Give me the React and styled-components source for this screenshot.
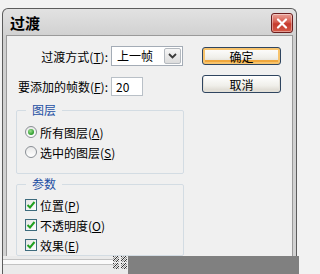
import React from 'react';
import styled, { createGlobalStyle } from 'styled-components';

const GlobalStyle = createGlobalStyle`
  html, body {
    margin: 0;
    padding: 0;
    background: #f2f2f2;
    overflow: hidden;
  }
  body {
    font-family: "Noto Sans CJK SC", "Noto Sans", sans-serif;
    font-size: 12px;
    color: #000;
  }
`;

const Screen = styled.div`
  width: 299px;
  height: 274px;
  display: flex;
  flex-direction: column;
  padding-top: 8px;
  box-sizing: border-box;
  background: #f2f2f2;
`;

const Window = styled.div`
  margin-left: 2px;
  width: 295px;
  height: 248px;
  box-sizing: border-box;
  display: flex;
  flex-direction: column;
  border: 1px solid #5c5c5c;
  border-bottom: none;
  border-radius: 6px 6px 0 0;
  background: linear-gradient(#e2e2e2, #cfcfcf 30px, #d2d2d2);
  padding: 0 3px;
`;

const TitleBar = styled.div`
  height: 26px;
  display: flex;
  align-items: center;
  justify-content: space-between;
  padding-left: 4px;
`;

const Title = styled.span`
  font-size: 15px;
  font-weight: bold;
  letter-spacing: 0;
`;

const CloseButton = styled.div`
  width: 22px;
  height: 20px;
  box-sizing: border-box;
  margin-top: 2px;
  border: 1px solid #6b1d1d;
  border-radius: 3px;
  background: linear-gradient(#eaa298, #d65c4e 45%, #c53a2c 55%, #d45a48);
  display: flex;
  align-items: center;
  justify-content: center;
  box-shadow: inset 0 0 0 1px rgba(255, 255, 255, 0.4);
`;

const Body = styled.div`
  flex: 1;
  background: #f0f0f0;
  border: 1px solid #9a9a9a;
  border-bottom: none;
  padding: 10px 0 0 7px;
  display: flex;
  gap: 19px;
`;

const FormColumn = styled.div`
  width: 169px;
  display: flex;
  flex-direction: column;
`;

const FieldRow = styled.div`
  display: flex;
  align-items: center;
  height: ${(p) => p.$h}px;
  margin-top: ${(p) => p.$top || 0}px;
`;

const Label = styled.label`
  width: 94px;
  text-align: right;
  white-space: nowrap;
  margin-right: 3px;
`;

const Select = styled.div`
  width: 72px;
  height: 20px;
  box-sizing: border-box;
  border: 1px solid #a4acb6;
  background: #fff;
  display: flex;
  align-items: stretch;
`;

const SelectValue = styled.span`
  flex: 1;
  padding-left: 5px;
  line-height: 18px;
`;

const ArrowButton = styled.span`
  width: 15px;
  margin: 1px;
  border: 1px solid #b4b9bf;
  border-radius: 2px;
  background: linear-gradient(#f6f6f6, #dcdcdc);
  display: flex;
  align-items: center;
  justify-content: center;
`;

const TextInput = styled.div`
  width: 32px;
  height: 19px;
  box-sizing: border-box;
  border: 1px solid #b9c0c7;
  background: #fff;
  padding-left: 4px;
  line-height: 17px;
`;

const Group = styled.fieldset`
  margin: ${(p) => p.$top}px 0 0 2px;
  padding: ${(p) => p.$pad};
  width: 168px;
  box-sizing: border-box;
  border: 1px solid #d3dce3;
  border-radius: 2px;
  min-width: 0;
`;

const Legend = styled.legend`
  margin-left: 9px;
  padding: 0 6px;
  height: 14px;
  line-height: 14px;
  color: #1d4fa3;
`;

const OptionRow = styled.div`
  height: 20px;
  display: flex;
  align-items: center;
  padding-left: 8px;
  gap: 3px;
`;

const Radio = styled.span`
  width: 12px;
  height: 12px;
  box-sizing: border-box;
  border-radius: 50%;
  border: 1px solid #8a8f95;
  background: linear-gradient(#e8e8e8, #ffffff);
  display: flex;
  align-items: center;
  justify-content: center;
  &::after {
    content: '';
    width: 6px;
    height: 6px;
    border-radius: 50%;
    background: ${(p) => (p.$on ? 'radial-gradient(circle at 40% 35%, #9be08c, #2b9a2b 70%)' : 'transparent')};
  }
`;

const Check = styled.span`
  width: 12px;
  height: 12px;
  box-sizing: border-box;
  border: 1px solid #3d6b7d;
  background: linear-gradient(135deg, #e4e4e4, #ffffff);
  display: flex;
  align-items: center;
  justify-content: center;
`;

const ButtonColumn = styled.div`
  display: flex;
  flex-direction: column;
  gap: 10px;
  padding-top: 1px;
`;

const Button = styled.div`
  width: 79px;
  height: 18px;
  box-sizing: border-box;
  border: 1px solid #2f4560;
  border-radius: 3px;
  background: linear-gradient(#ffffff, #f0efea 60%, #d8d4cb);
  display: flex;
  align-items: center;
  justify-content: center;
  box-shadow: ${(p) => (p.$default ? 'inset 0 0 0 2px #f7c36c, inset 0 -2px 0 2px #f0a73c' : 'inset 0 -1px 0 1px #e3e0d8')};
`;

const BottomStrip = styled.div`
  flex: 1;
  display: flex;
`;

const StatusPart = styled.div`
  width: 126px;
  margin-left: 2px;
  box-sizing: border-box;
  border-left: 1px solid #5c5c5c;
  background: #eaeaea;
  display: flex;
  align-items: flex-start;
  position: relative;
`;

const StatusLines = styled.div`
  flex: 1;
  margin-top: 3px;
  height: 4px;
  border-top: 1px solid #c2c2c2;
  border-bottom: 1px solid #c2c2c2;
  background: #fafafa;
`;

const Grip = styled.svg`
  flex: none;
  margin-right: 1px;
`;

const Backdrop = styled.div`
  flex: 1;
  background: #808080;
`;

const Chevron = () => (
  <svg width="9" height="6" viewBox="0 0 9 6">
    <path d="M1 1 L4.5 4.5 L8 1" fill="none" stroke="#3a3a3a" strokeWidth="1.8" />
  </svg>
);

const Tick = () => (
  <svg width="10" height="10" viewBox="0 0 10 10">
    <path d="M1.5 5 L4 7.5 L8.5 2" fill="none" stroke="#21a121" strokeWidth="2" />
  </svg>
);

const Cross = () => (
  <svg width="12" height="11" viewBox="0 0 12 11">
    <path d="M2 1.5 L10 9.5 M10 1.5 L2 9.5" stroke="#ffffff" strokeWidth="2.2" strokeLinecap="round" />
  </svg>
);

const GripDots = () => {
  const cells = [];
  [0, 8].forEach((bx) =>
    [0, 7].forEach((by) => {
      for (let y = 0; y < 6; y++)
        for (let x = 0; x < 6; x++)
          if ((x + y) % 2 === 0)
            cells.push(<rect key={`${bx}-${by}-${x}-${y}`} x={bx + x} y={by + y} width="1" height="1" fill={(x + y) % 4 === 0 ? '#333' : '#999'} />);
    })
  );
  return (
    <Grip width="14" height="14" viewBox="0 0 14 14">
      {cells}
    </Grip>
  );
};

const radios = [
  { label: '所有图层', key: 'A', on: true },
  { label: '选中的图层', key: 'S', on: false },
];

const checks = [
  { label: '位置', key: 'P' },
  { label: '不透明度', key: 'O' },
  { label: '效果', key: 'E' },
];

export default function App() {
  return (
    <Screen>
      <GlobalStyle />
      <Window>
        <TitleBar>
          <Title>过渡</Title>
          <CloseButton>
            <Cross />
          </CloseButton>
        </TitleBar>
        <Body>
          <FormColumn>
            <FieldRow $h={20}>
              <Label>过渡方式(<u>T</u>):</Label>
              <Select>
                <SelectValue>上一帧</SelectValue>
                <ArrowButton>
                  <Chevron />
                </ArrowButton>
              </Select>
            </FieldRow>
            <FieldRow $h={19} $top={11}>
              <Label>要添加的帧数(<u>F</u>):</Label>
              <TextInput>20</TextInput>
            </FieldRow>
            <Group $top={7} $pad="5px 0 11px 0">
              <Legend>图层</Legend>
              {radios.map((r) => (
                <OptionRow key={r.key}>
                  <Radio $on={r.on} />
                  <span>
                    {r.label}(<u>{r.key}</u>)
                  </span>
                </OptionRow>
              ))}
            </Group>
            <Group $top={3} $pad="4px 0 0 0">
              <Legend>参数</Legend>
              {checks.map((c) => (
                <OptionRow key={c.key}>
                  <Check>
                    <Tick />
                  </Check>
                  <span>
                    {c.label}(<u>{c.key}</u>)
                  </span>
                </OptionRow>
              ))}
            </Group>
          </FormColumn>
          <ButtonColumn>
            <Button $default>确定</Button>
            <Button>取消</Button>
          </ButtonColumn>
        </Body>
      </Window>
      <BottomStrip>
        <StatusPart>
          <StatusLines />
          <GripDots />
        </StatusPart>
        <Backdrop />
      </BottomStrip>
    </Screen>
  );
}
